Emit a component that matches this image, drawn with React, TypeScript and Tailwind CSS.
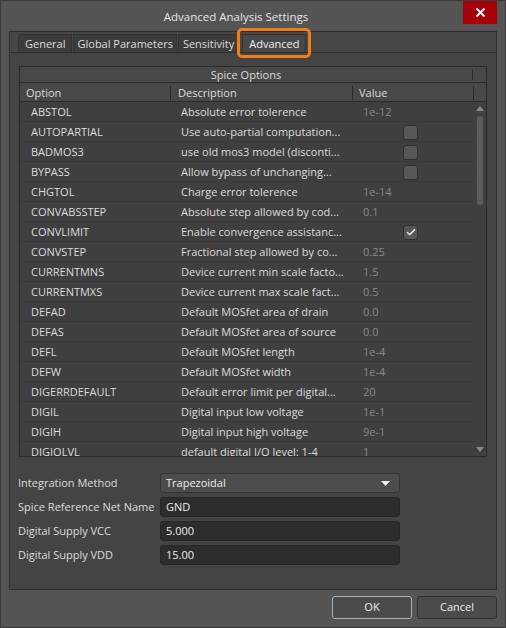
import React from "react";

type Row = { o: string; d: string; v?: string; cb?: boolean; checked?: boolean };

const rows: Row[] = [
  { o: "ABSTOL", d: "Absolute error tolerence", v: "1e-12" },
  { o: "AUTOPARTIAL", d: "Use auto-partial computation...", cb: true },
  { o: "BADMOS3", d: "use old mos3 model (disconti...", cb: true },
  { o: "BYPASS", d: "Allow bypass of unchanging...", cb: true },
  { o: "CHGTOL", d: "Charge error tolerence", v: "1e-14" },
  { o: "CONVABSSTEP", d: "Absolute step allowed by cod...", v: "0.1" },
  { o: "CONVLIMIT", d: "Enable convergence assistanc...", cb: true, checked: true },
  { o: "CONVSTEP", d: "Fractional step allowed by co...", v: "0.25" },
  { o: "CURRENTMNS", d: "Device current min scale facto...", v: "1.5" },
  { o: "CURRENTMXS", d: "Device current max scale fact...", v: "0.5" },
  { o: "DEFAD", d: "Default MOSfet area of drain", v: "0.0" },
  { o: "DEFAS", d: "Default MOSfet area of source", v: "0.0" },
  { o: "DEFL", d: "Default MOSfet length", v: "1e-4" },
  { o: "DEFW", d: "Default MOSfet width", v: "1e-4" },
  { o: "DIGERRDEFAULT", d: "Default error limit per digital...", v: "20" },
  { o: "DIGIL", d: "Digital input low voltage", v: "1e-1" },
  { o: "DIGIH", d: "Digital input high voltage", v: "9e-1" },
  { o: "DIGIOLVL", d: "default digital I/O level: 1-4", v: "1" },
];

function Checkbox({ checked }: { checked?: boolean }) {
  return (
    <div className="w-[15px] h-[15px] rounded-[3px] bg-[#575757] border border-[#2e2e2e] flex items-center justify-center">
      {checked && (
        <svg width="10" height="8" viewBox="0 0 10 8">
          <path d="M1 4.2 L3.8 6.6 L9 1.4" stroke="#e8e8e8" strokeWidth="1.5" fill="none" />
        </svg>
      )}
    </div>
  );
}

function Field({ label, children }: { label: string; children: React.ReactNode }) {
  return (
    <div className="flex items-center h-[20px]">
      <div className="w-[142px] text-[#dcdcdc] whitespace-nowrap">{label}</div>
      {children}
    </div>
  );
}

export default function App() {
  return (
    <div
      className="w-[506px] h-[628px] bg-[#545454] border border-[#3a3a3a] flex flex-col text-[11px] text-[#dcdcdc] overflow-hidden"
      style={{ fontFamily: '"Open Sans", "Noto Sans", sans-serif' }}
    >
      {/* Title bar */}
      <div className="relative h-[30px] flex items-center justify-center shrink-0">
        <span className="text-[11.5px] text-[#e6e6e6] -ml-[34px] mt-[2px]">Advanced Analysis Settings</span>
        <div className="absolute right-[8px] top-0 w-[34px] h-[23px] bg-[#a6000b] flex items-center justify-center">
          <svg width="11" height="11" viewBox="0 0 11 11">
            <path d="M1.5 1.5 L9.5 9.5 M9.5 1.5 L1.5 9.5" stroke="#fff" strokeWidth="1.8" />
          </svg>
        </div>
      </div>

      {/* Tab frame */}
      <div className="mx-[8px] h-[559px] border border-[#2e2e2e] bg-[#444444] flex flex-col shrink-0">
        <div className="relative flex items-end h-[21px] pl-[8px] pt-[3px] border-b border-[#2f2f2f] bg-[#464646]">
          <div className="h-[18px] px-[6px] flex items-center bg-[#3c3c3c] border border-[#333] border-b-0 mr-[1px] pt-[1px]">General</div>
          <div className="h-[18px] px-[3px] flex items-center bg-[#3c3c3c] border border-[#333] border-b-0 mr-[1px] pt-[1px]">Global Parameters</div>
          <div className="h-[18px] px-[4px] flex items-center bg-[#3c3c3c] border border-[#333] border-b-0 pt-[1px]">Sensitivity</div>
          <div className="relative ml-[3px] h-[18px] px-[6px] flex items-center bg-[#484848] border border-[#333] border-b-0 text-[#f0f0f0] pt-[1px]">
            Advanced
            <div className="absolute -left-[6px] -right-[6px] -top-[7px] -bottom-[6px] border-[3px] border-[#f07c1a] rounded-[5px]" />
          </div>
        </div>

        {/* Table */}
        <div className="mx-[9px] mt-[13px] h-[391px] border border-[#2a2a2a] bg-[#3f3f3f] flex flex-col overflow-hidden">
          <div className="flex h-[16px] bg-[#484848] border-b border-[#2c2c2c] shrink-0">
            <div className="flex-1 text-center leading-[16px]">Spice Options</div>
            <div className="w-[14px] border-l border-[#2a2a2a] my-[2px]" />
          </div>
          <div className="flex h-[19px] bg-[#484848] border-b border-[#2c2c2c] shrink-0 items-center pt-[2px]">
            <div className="w-[151px] pl-[6px] border-r border-[#2a2a2a] h-[14px] flex items-center">Option</div>
            <div className="w-[182px] pl-[7px] border-r border-[#2a2a2a] h-[14px] flex items-center">Description</div>
            <div className="w-[121px] pl-[6px] border-r border-[#2a2a2a] h-[14px] flex items-center">Value</div>
            <div className="flex-1" />
          </div>
          <div className="flex flex-1 overflow-hidden">
            <div className="w-[454px] flex flex-col">
              {rows.map((r) => (
                <div key={r.o} className="flex h-[20px] shrink-0 items-center border-b border-[#393939] pt-[2px]">
                  <div className="w-[151px] pl-[11px]">{r.o}</div>
                  <div className="w-[182px] pl-[10px] whitespace-nowrap">{r.d}</div>
                  <div className="w-[121px] pl-[10px] text-[#8a8a8a] flex items-center">
                    {r.cb ? (
                      <div className="ml-[40px] -mt-[1px]">
                        <Checkbox checked={r.checked} />
                      </div>
                    ) : (
                      r.v
                    )}
                  </div>
                </div>
              ))}
            </div>
            <div className="flex-1 flex flex-col items-center pt-[4px] pb-[4px]">
              <svg width="8" height="5" viewBox="0 0 8 5">
                <path d="M0 5 L4 0 L8 5 Z" fill="#8a8a8a" />
              </svg>
              <div className="mt-[5px] w-[6px] h-[89px] rounded-[3px] bg-[#5c5c5c]" />
              <div className="flex-1" />
              <svg width="8" height="5" viewBox="0 0 8 5">
                <path d="M0 0 L8 0 L4 5 Z" fill="#8a8a8a" />
              </svg>
            </div>
          </div>
        </div>

        {/* Form */}
        <div className="mt-[16px] pl-[8px] flex flex-col gap-[4px]">
          <Field label="Integration Method">
            <div className="w-[240px] h-[20px] rounded-[3px] bg-[#4c4c4c] border border-[#333] flex items-center pl-[5px] pr-[9px] justify-between">
              <span className="text-[#ececec]">Trapezoidal</span>
              <svg width="9" height="5" viewBox="0 0 9 5">
                <path d="M0 0 L9 0 L4.5 5 Z" fill="#f0f0f0" />
              </svg>
            </div>
          </Field>
          <Field label="Spice Reference Net Name">
            <div className="w-[240px] h-[20px] rounded-[3px] bg-[#2d2d2d] border border-[#262626] flex items-center pl-[5px] text-[#ececec]">GND</div>
          </Field>
          <Field label="Digital Supply VCC">
            <div className="w-[240px] h-[20px] rounded-[3px] bg-[#2d2d2d] border border-[#262626] flex items-center pl-[5px] text-[#ececec]">5.000</div>
          </Field>
          <Field label="Digital Supply VDD">
            <div className="w-[240px] h-[20px] rounded-[3px] bg-[#2d2d2d] border border-[#262626] flex items-center pl-[5px] text-[#ececec]">15.00</div>
          </Field>
        </div>
      </div>

      {/* Buttons */}
      <div className="flex justify-end gap-[5px] pr-[8px] mt-[6px]">
        <div className="w-[80px] h-[23px] rounded-[3px] border border-[#a3b3c2] bg-[#4b4b4b] flex items-center justify-center text-[#ececec]">OK</div>
        <div className="w-[80px] h-[23px] rounded-[3px] border border-[#2e2e2e] bg-[#4b4b4b] flex items-center justify-center text-[#ececec]">Cancel</div>
      </div>
    </div>
  );
}
